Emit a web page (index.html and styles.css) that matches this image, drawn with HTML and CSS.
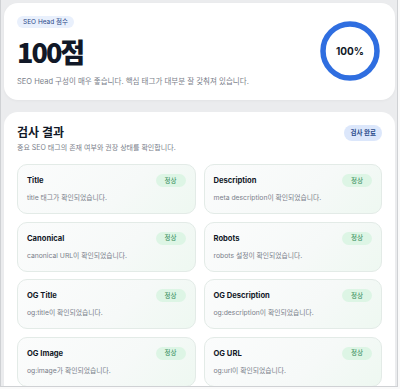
FILE: index.html
```html
<!DOCTYPE html>
<html lang="ko">
<head>
    <meta charset="UTF-8">
    <meta name="viewport" content="width=device-width, initial-scale=1.0">
    <title>SEO Head 검사</title>
    <link rel="stylesheet" href="styles.css">
</head>
<body>
    <div class="frame">
        <section class="score-card">
            <div class="score-info">
                <span class="score-label">SEO Head 점수</span>
                <h1 class="score">100점</h1>
                <p class="score-desc">SEO Head 구성이 매우 좋습니다. 핵심 태그가 대부분 잘 갖춰져 있습니다.</p>
            </div>
            <div class="ring">
                <svg width="60" height="60" viewBox="0 0 60 60">
                    <circle cx="30" cy="30" r="27" fill="none" stroke="#2f6ee0" stroke-width="5.5"/>
                </svg>
                <span class="ring-text">100%</span>
            </div>
        </section>

        <section class="result-card">
            <div class="result-head">
                <div>
                    <h2>검사 결과</h2>
                    <p>중요 SEO 태그의 존재 여부와 권장 상태를 확인합니다.</p>
                </div>
                <span class="done">검사 완료</span>
            </div>

            <div class="grid">
                <div class="item">
                    <div class="item-top"><b>Title</b><span class="ok">정상</span></div>
                    <p>title 태그가 확인되었습니다.</p>
                </div>
                <div class="item">
                    <div class="item-top"><b>Description</b><span class="ok">정상</span></div>
                    <p>meta description이 확인되었습니다.</p>
                </div>
                <div class="item">
                    <div class="item-top"><b>Canonical</b><span class="ok">정상</span></div>
                    <p>canonical URL이 확인되었습니다.</p>
                </div>
                <div class="item">
                    <div class="item-top"><b>Robots</b><span class="ok">정상</span></div>
                    <p>robots 설정이 확인되었습니다.</p>
                </div>
                <div class="item">
                    <div class="item-top"><b>OG Title</b><span class="ok">정상</span></div>
                    <p>og:title이 확인되었습니다.</p>
                </div>
                <div class="item">
                    <div class="item-top"><b>OG Description</b><span class="ok">정상</span></div>
                    <p>og:description이 확인되었습니다.</p>
                </div>
                <div class="item">
                    <div class="item-top"><b>OG Image</b><span class="ok">정상</span></div>
                    <p>og:image가 확인되었습니다.</p>
                </div>
                <div class="item">
                    <div class="item-top"><b>OG URL</b><span class="ok">정상</span></div>
                    <p>og:url이 확인되었습니다.</p>
                </div>
            </div>
        </section>
    </div>
</body>
</html>
```

FILE: styles.css
```css
body {
    margin: 0;
    font-family: 'Inter', 'Noto Sans CJK KR', sans-serif;
    background-color: #fafafa;
    color: #111827;
}

.frame {
    width: 398px;
    height: 387px;
    box-sizing: border-box;
    border: 1px solid #cfd1d4;
    border-top: none;
    background-color: #ebecee;
    padding: 3px 2px 0 3px;
    overflow: hidden;
}

.score-card {
    height: 97px;
    box-sizing: border-box;
    background-color: white;
    border-radius: 14px;
    padding: 13px 13px 0 13px;
    display: flex;
    justify-content: space-between;
    box-shadow: 0 1px 3px rgba(0, 0, 0, 0.04);
}

.score-info {
    display: flex;
    flex-direction: column;
    align-items: flex-start;
}

.score-label {
    background-color: #e9f0fc;
    color: #2b4a8a;
    font-size: 6.5px;
    line-height: 8px;
    padding: 2px 6px;
    border-radius: 10px;
}

.score {
    margin: 9px 0 0 0;
    font-family: 'Noto Sans CJK KR', sans-serif;
    font-size: 27px;
    font-weight: 800;
    letter-spacing: -2px;
    line-height: 30px;
}

.score-desc {
    margin: 10px 0 0 0;
    font-size: 7.5px;
    line-height: 10px;
    color: #7a808a;
}

.ring {
    position: relative;
    width: 60px;
    height: 60px;
    margin: 5px 2px 0 0;
}

.ring svg {
    display: block;
}

.ring-text {
    position: absolute;
    inset: 0;
    display: flex;
    align-items: center;
    justify-content: center;
    font-size: 10px;
    font-weight: 700;
}

.result-card {
    margin-top: 12px;
    background-color: white;
    border-radius: 14px;
    padding: 12px 13px 12px 13px;
}

.result-head {
    display: flex;
    justify-content: space-between;
    align-items: flex-start;
}

.result-head h2 {
    margin: 0;
    font-size: 12px;
    font-weight: 700;
    line-height: 18px;
}

.result-head p {
    margin: 1px 0 0 0;
    font-size: 7px;
    line-height: 10px;
    color: #7a808a;
}

.done {
    background-color: #dce7fb;
    color: #2b4a8a;
    font-size: 6.5px;
    line-height: 8px;
    font-weight: 600;
    padding: 4px 6px;
    border-radius: 10px;
    margin-top: 1px;
}

.grid {
    margin-top: 11px;
    display: grid;
    grid-template-columns: 1fr 1fr;
    gap: 7.5px 8px;
}

.item {
    height: 50px;
    box-sizing: border-box;
    border: 1px solid #e3ebe7;
    border-radius: 10px;
    background: linear-gradient(135deg, #fbfcfc 0%, #f6f9f8 60%, #eef8f1 100%);
    padding: 9px 9px 0 9px;
}

.item-top {
    display: flex;
    justify-content: space-between;
    align-items: center;
}

.item-top b {
    font-size: 7.6px;
    font-weight: 700;
}

.ok {
    background-color: #ddf5e5;
    color: #2e8a55;
    font-size: 6.5px;
    line-height: 8px;
    padding: 2.5px 9px;
    border-radius: 10px;
}

.item p {
    margin: 6px 0 0 0;
    font-size: 6.8px;
    line-height: 9px;
    color: #7a808a;
}
```
